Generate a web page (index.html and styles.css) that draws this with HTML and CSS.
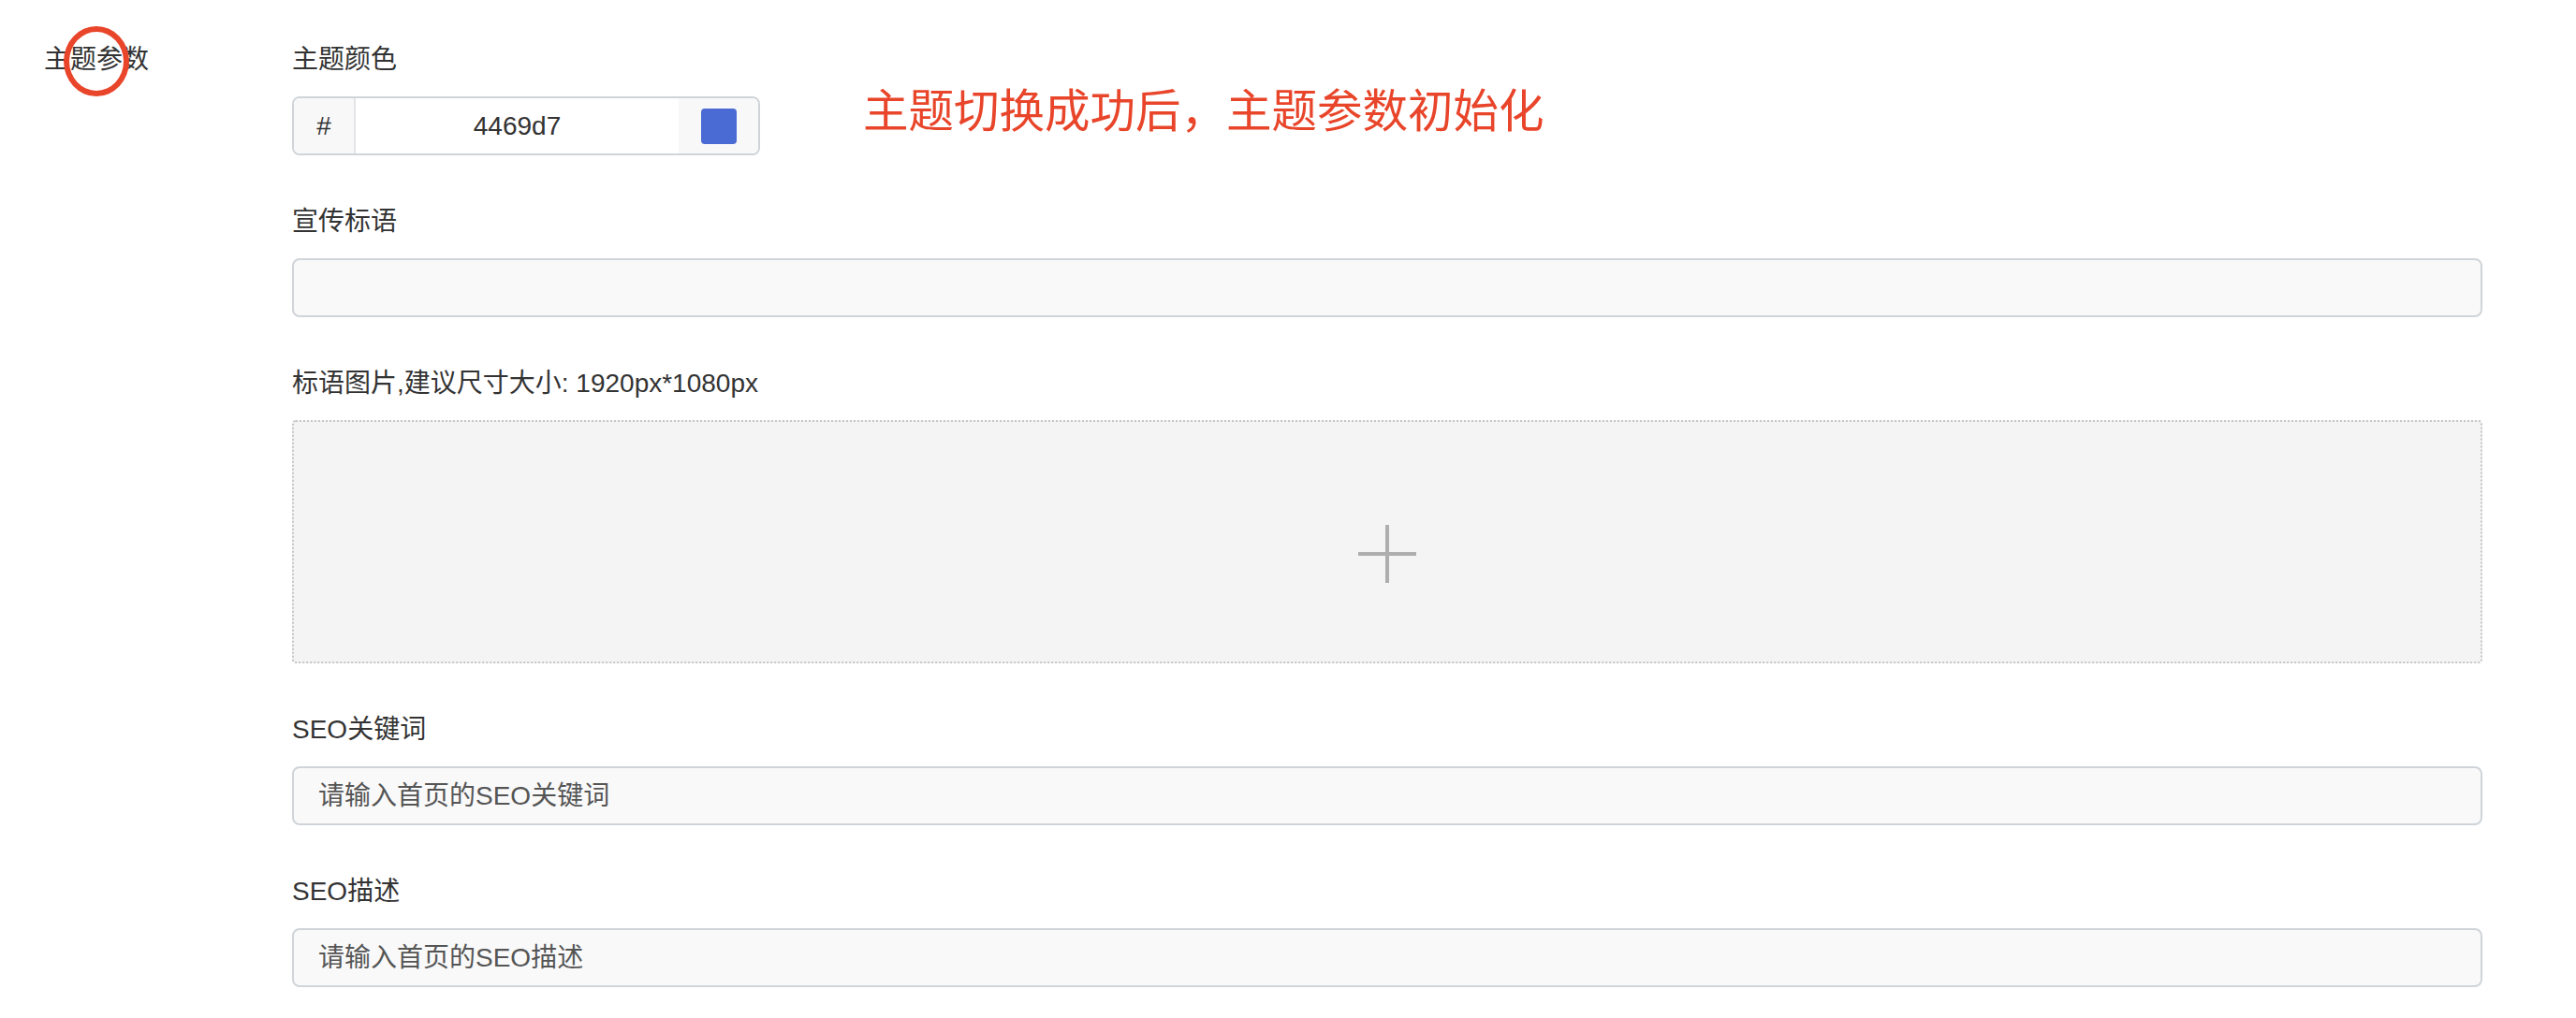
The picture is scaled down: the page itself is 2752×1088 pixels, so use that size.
FILE: index.html
```html
<!DOCTYPE html>
<html lang="zh-CN">

<head>
  <meta charset="UTF-8" />
  <title>主题参数</title>

  <link rel="stylesheet" href="styles.css">
</head>

<body>
  <div class="page">
    <div class="side-label">主题参数</div>

    <div class="form">
      <div class="form-group">
        <label for="themeColor">主题颜色</label>
        <div class="color-input">
          <span class="addon addon-hash">#</span>
          <input type="text" id="themeColor" class="color-value" value="4469d7" />
          <span class="addon addon-swatch"><span class="swatch"></span></span>
        </div>
      </div>

      <div class="form-group">
        <label for="slogan">宣传标语</label>
        <input type="text" id="slogan" class="text-input" />
      </div>

      <div class="form-group">
        <label>标语图片,建议尺寸大小: 1920px*1080px</label>
        <div class="upload-box">
          <svg class="plus" width="62" height="62" viewBox="0 0 62 62">
            <rect x="29" y="0" width="4" height="62" fill="#aeaeae" />
            <rect x="0" y="29" width="62" height="4" fill="#aeaeae" />
          </svg>
        </div>
      </div>

      <div class="form-group">
        <label for="seoKeywords">SEO关键词</label>
        <input type="text" id="seoKeywords" class="text-input" placeholder="请输入首页的SEO关键词" />
      </div>

      <div class="form-group">
        <label for="seoDesc">SEO描述</label>
        <input type="text" id="seoDesc" class="text-input" placeholder="请输入首页的SEO描述" />
      </div>
    </div>

    <!-- 标注 -->
    <span class="mark-circle"></span>
    <div class="note">主题切换成功后，主题参数初始化</div>
  </div>
</body>

</html>
```

FILE: styles.css
```css
body {
  margin: 0;
  background: #fff;
  font-family: "Liberation Sans", "Noto Sans CJK SC", sans-serif;
  color: #333;
}

.page {
  position: relative;
  display: flex;
  padding: 41px 100px 0 47px;
}

.side-label {
  width: 265px;
  flex-shrink: 0;
  padding-top: 3px;
  font-size: 28px;
  line-height: 40px;
}

.form {
  flex: 1;
  display: flex;
  flex-direction: column;
  gap: 48px;
}

.form-group label {
  display: block;
  padding-top: 3px;
  font-size: 28px;
  line-height: 40px;
  margin-bottom: 19px;
  color: #333;
}

.text-input {
  display: block;
  width: 100%;
  height: 63px;
  padding: 0 26px;
  border: 2px solid #d0d4d9;
  border-radius: 8px;
  background-color: #f9f9f9;
  font-family: inherit;
  font-size: 28px;
  color: #333;
  box-sizing: border-box;
  outline: none;
}

.text-input::placeholder {
  color: #555;
  opacity: 1;
}

.color-input {
  display: flex;
  width: 500px;
  height: 63px;
  border: 2px solid #d0d4d9;
  border-radius: 8px;
  overflow: hidden;
  box-sizing: border-box;
}

.addon {
  display: flex;
  align-items: center;
  justify-content: center;
  background-color: #f8f8f8;
  font-size: 28px;
}

.addon-hash {
  width: 64px;
  border-right: 2px solid #e2e4e7;
}

.addon-swatch {
  width: 85px;
}

.swatch {
  width: 38px;
  height: 38px;
  border-radius: 4px;
  background-color: #4a6ad4;
}

.color-value {
  flex: 1;
  min-width: 0;
  border: none;
  padding: 0;
  background: #fff;
  text-align: center;
  font-family: inherit;
  font-size: 28px;
  color: #333;
  outline: none;
}

.upload-box {
  display: flex;
  align-items: center;
  justify-content: center;
  height: 260px;
  padding-top: 26px;
  border: 2px dotted #c6c6c6;
  border-radius: 4px;
  background-color: #f4f4f4;
  box-sizing: border-box;
}

.mark-circle {
  position: absolute;
  left: 68px;
  top: 28px;
  width: 70px;
  height: 75px;
  border: 6px solid #e8452a;
  border-radius: 50%;
  box-sizing: border-box;
}

.note {
  position: absolute;
  left: 922px;
  top: 87px;
  font-size: 48.5px;
  line-height: 64px;
  color: #e8452a;
}
```
